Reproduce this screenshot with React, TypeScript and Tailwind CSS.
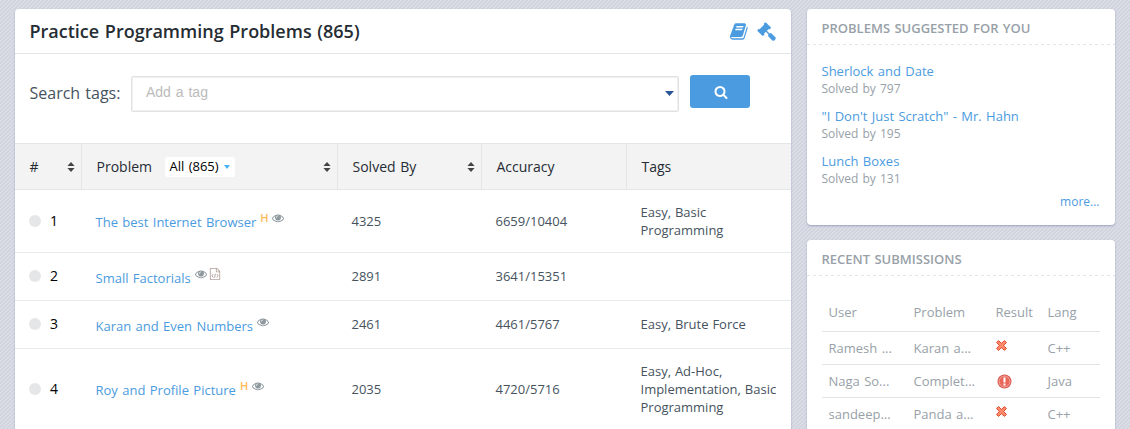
import React from "react";

const BOOK =
  "M1639 478q40 57 18 129l-275 906q-19 64-76.5 107.5t-122.500 43.500h-923q-77 0-148.500-53.500t-99.500-131.500q-24-67-2-127 0-4 3-27t4-37q1-8-3-21.500t-3-19.500q2-11 8-21t16.500-23.500 16.500-23.500q23-38 45-91.500t30-91.500q3-10 .5-30t-.5-28q3-11 17-28t17-23q21-36 42-92t25-90q1-9-2.500-32t.5-28q4-13 22-30.500t22-22.500q19-26 42.500-84.500t27.500-96.500q1-8-3-25.500t-2-26.500q2-8 9-18t18-23 17-21q8-12 16.500-30.500t15-35 16-36 19.500-32 26.500-23.500 36-11.500 47.500 5.500l-1 3q38-9 51-9h761q74 0 114 56t18 130l-274 906q-36 119-71.500 153.500t-128.500 34.500h-869q-27 0-38 15-11 16-1 43 24 70 144 70h923q29 0 56-15.500t35-41.500l300-987q7-22 5-57 38 15 59 43zm-1064 2q-4 13 2 22.500t20 9.500h608q13 0 25.500-9.500t16.500-22.500l21-64q4-13-2-22.500t-20-9.500h-608q-13 0-25.500 9.500t-16.500 22.500zm-83 256q-4 13 2 22.500t20 9.500h608q13 0 25.500-9.500t16.500-22.500l21-64q4-13-2-22.500t-20-9.500h-608q-13 0-25.500 9.500t-16.500 22.500z";
const GAVEL =
  "M1771 1536q0 53-37 90l-107 108q-39 37-91 37-53 0-90-37l-363-364q-38-36-38-90 0-53 43-96l-256-256-126 126q-14 14-34 14t-34-14q2 2 12.500 12t12.500 13 10 11.500 10 13.500 6 13.500 5.500 16.500 1.500 18q0 38-28 68-3 3-16.500 18t-19 20.500-18.500 16.500-22 15.500-22 9-26 4.500q-40 0-68-28l-408-408q-28-28-28-68 0-13 4.500-26t9-22 15.500-22 16.500-18.500 20.500-19 18-16.500q30-28 68-28 10 0 18 1.500t16.500 5.500 13.500 6 13.500 10 11.500 10 13 12.500 12 12.500q-14-14-14-34t14-34l348-348q14-14 34-14t34 14q-2-2-12.500-12t-12.500-13-10-11.500-10-13.500-6-13.500-5.500-16.500-1.500-18q0-38 28-68 3-3 16.500-18t19-20.500 18.500-16.500 22-15.500 22-9 26-4.500q40 0 68 28l408 408q28 28 28 68 0 13-4.500 26t-9 22-15.500 22-16.500 18.500-20.500 19-18 16.500q-30 28-68 28-10 0-18-1.500t-16.500-5.500-13.500-6-13.500-10-11.500-10-13-12.500-12-12.500q14 14 14 34t-14 34l-126 126 256 256q43-43 96-43 52 0 91 37l363 363q37 39 37 91z";
const SEARCH =
  "M1216 832q0-185-131.500-316.500t-316.500-131.500-316.500 131.500-131.500 316.500 131.500 316.500 316.500 131.500 316.500-131.500 131.500-316.500zm512 832q0 52-38 90t-90 38q-54 0-90-38l-343-342q-179 124-399 124-143 0-273.500-55.500t-225-150-150-225-55.500-273.500 55.500-273.500 150-225 225-150 273.500-55.500 273.500 55.500 225 150 150 225 55.500 273.500q0 220-124 399l343 343q37 37 37 90z";
const EYE =
  "M1664 960q-152-236-381-353 61 104 61 225 0 185-131.500 316.500t-316.500 131.500-316.500-131.500-131.500-316.500q0-121 61-225-229 117-381 353 133 205 333.500 326.500t434.500 121.500 434.500-121.500 333.500-326.500zm-720-384q0-20-14-34t-34-14q-125 0-214.500 89.500t-89.500 214.500q0 20 14 34t34 14 34-14 14-34q0-86 61-147t147-61q20 0 34-14t14-34zm848 384q0 34-20 69-140 230-376.500 368.500t-499.500 138.500-499.500-139-376.500-368q-20-35-20-69t20-69q140-229 376.500-368t499.500-139 499.500 139 376.500 368q20 35 20 69z";
const FILE =
  "M1596 380q28 28 48 76t20 88v1152q0 40-28 68t-68 28h-1344q-40 0-68-28t-28-68v-1600q0-40 28-68t68-28h896q40 0 88 20t76 48zm-444-244v376h376q-10-29-22-41l-313-313q-12-12-41-22zm384 1528v-1024h-416q-40 0-68-28t-28-68v-416h-768v1536h1280z";

function Glyph({ d, className, children }: { d: string; className: string; children?: React.ReactNode }) {
  return (
    <svg viewBox="0 0 1792 1792" fill="currentColor" className={className}>
      <path d={d} />
      {children}
    </svg>
  );
}

function Sort() {
  return (
    <svg viewBox="0 0 8 10" className="h-[10px] w-[8px] shrink-0 text-[#444]" fill="currentColor">
      <path d="M4 0L7.600 4H.4zM4 10L.4 6h7.200z" />
    </svg>
  );
}

type Mark = "H" | "eye" | "file";
type Row = { n: number; name: string; marks: Mark[]; solved: string; acc: string; tags: string; h: string; link: string };

const rows: Row[] = [
  { n: 1, name: "The best Internet Browser", marks: ["H", "eye"], solved: "4325", acc: "6659/10404", tags: "Easy, Basic Programming", h: "h-[63px]", link: "pt-[1px]" },
  { n: 2, name: "Small Factorials", marks: ["eye", "file"], solved: "2891", acc: "3641/15351", tags: "", h: "h-[48px] pb-[1px]", link: "pt-[3px]" },
  { n: 3, name: "Karan and Even Numbers", marks: ["eye"], solved: "2461", acc: "4461/5767", tags: "Easy, Brute Force", h: "h-[48px] pb-[1px]", link: "pt-[3px]" },
  { n: 4, name: "Roy and Profile Picture", marks: ["H", "eye"], solved: "2035", acc: "4720/5716", tags: "Easy, Ad-Hoc, Implementation, Basic Programming", h: "h-[82px] pb-[2px]", link: "pt-[3px]" },
];

const GRID = "grid grid-cols-[67px_256px_144px_145px_164px]";

function MarkIcon({ mark }: { mark: Mark }) {
  if (mark === "H") return <span className="w-[10px] text-[11px] leading-[12px] font-semibold text-[#fcbb58]">H</span>;
  if (mark === "eye") return <Glyph d={EYE} className="h-[12px] w-[12px] text-[#8e989f]" />;
  return (
    <Glyph d={FILE} className="h-[12px] w-[12px] text-[#b3a09c]">
      <path
        d="M640 900L440 1160l200 260M1152 900l200 260-200 260M960 860L830 1460"
        fill="none"
        stroke="currentColor"
        strokeWidth="140"
      />
    </Glyph>
  );
}

function ProblemRow({ row }: { row: Row }) {
  return (
    <div className={`${GRID} ${row.h} items-center border-b border-[#e9eaeb] text-[13px] leading-[18px] text-[#46535e]`}>
      <div className="flex items-center pl-[14px]">
        <span className="size-[12px] rounded-full bg-[#e4e6e8]" />
        <span className="pl-[9px] text-[14px] text-black">{row.n}</span>
      </div>
      <div className={`flex items-start pl-[13.5px] ${row.link}`}>
        <a className="text-[#4b9be0] [word-spacing:1px]">{row.name}</a>
        <span className="-mt-[1px] flex items-center gap-[2px] pl-[4px]">
          {row.marks.map((m) => (
            <MarkIcon key={m} mark={m} />
          ))}
        </span>
      </div>
      <div className="pl-[13.5px]">{row.solved}</div>
      <div className="pl-[13.5px]">{row.acc}</div>
      <div className="pr-[10px] pl-[13.5px] [word-spacing:0.5px]">{row.tags}</div>
    </div>
  );
}

function Wrong() {
  return (
    <svg viewBox="0 0 11 11" className="h-[11px] w-[11px]">
      <path
        d="M2.500 .6L5.500 3.300 8.500 .6 10.400 2.500 7.700 5.500 10.400 8.500 8.500 10.400 5.500 7.700 2.500 10.400 .6 8.500 3.300 5.500 .6 2.500z"
        fill="#ff8a6c"
        stroke="#de4a2c"
        strokeWidth="1"
      />
    </svg>
  );
}

function Alert() {
  return (
    <svg viewBox="0 0 15 15" className="h-[15px] w-[15px]">
      <circle cx="7.500" cy="7.500" r="7" fill="#d9534a" />
      <circle cx="7.500" cy="7.500" r="5.500" fill="#e8675a" stroke="#f6b5aa" strokeWidth=".9" />
      <path d="M6.500 3.500h2v5h-2zM6.500 9.500h2v2h-2z" fill="#fff" />
    </svg>
  );
}

const suggested = [
  ["Sherlock and Date", "797"],
  ["\"I Don't Just Scratch\" - Mr. Hahn", "195"],
  ["Lunch Boxes", "131"],
];

const recent = [
  { user: "Ramesh ...", problem: "Karan a...", alert: false, lang: "C++" },
  { user: "Naga So...", problem: "Complet...", alert: true, lang: "Java" },
  { user: "sandeep...", problem: "Panda a...", alert: false, lang: "C++" },
];

const RGRID = "grid grid-cols-[85px_82px_52px_59px] pl-[6.5px]";
const PANEL = "rounded-[4px] bg-white shadow-[0_1px_2px_rgba(120,125,170,0.6)]";

function SideHeading({ children }: { children: React.ReactNode }) {
  return (
    <div>
      <h2 className="flex h-[35px] items-center pt-[4px] pl-[14.5px] text-[13px] font-semibold text-[#98a1a8] [word-spacing:1px]">
        {children}
      </h2>
      <div className="h-px bg-[repeating-linear-gradient(90deg,#e3e4e5_0,#e3e4e5_3px,transparent_3px,transparent_6px)]" />
    </div>
  );
}

export default function App() {
  return (
    <div className="flex h-[429px] w-[1130px] items-start gap-[16px] overflow-hidden bg-[#d4d7e1] bg-[linear-gradient(135deg,#dadde6_25%,#d1d4df_25%,#d1d4df_50%,#dadde6_50%,#dadde6_75%,#d1d4df_75%)] bg-[size:4px_4px] pt-[9px] pl-[15px] font-['Open_Sans',sans-serif]">
      <main className={`${PANEL} h-[440px] w-[776px] shrink-0`}>
        <header className="flex h-[45px] items-center border-b border-[#e4e5e7] pr-[15px] pl-[14.5px]">
          <h1 className="flex-1 text-[18px] font-semibold text-[#252c33] [word-spacing:1px]">
            Practice Programming Problems (865)
          </h1>
          <Glyph d={BOOK} className="mt-px mr-[8px] h-[19px] w-[19px] text-[#4b9be0]" />
          <Glyph d={GAVEL} className="h-[19px] w-[19px] text-[#4b9be0]" />
        </header>
        <div className="flex h-[89px] items-start pt-[21px] pl-[14.5px]">
          <label className="w-[101.5px] pt-[6px] text-[16px] leading-[24px] text-[#46535e] [word-spacing:1px]">
            Search tags:
          </label>
          <div className="mt-px flex h-[36px] w-[548px] items-center justify-between rounded-[2px] border border-[#e0e1e3] pr-[4px] pl-[14px] shadow-[inset_0_0_0_1px_#f1f1f2]">
            <span className="pb-[4px] font-['Liberation_Sans',sans-serif] text-[14px] [word-spacing:1px] text-[#bbb]">Add a tag</span>
            <svg viewBox="0 0 9 5" className="mb-[1px] h-[5px] w-[9px]" fill="#2a5599">
              <path d="M0 0h9L4.500 5z" />
            </svg>
          </div>
          <button className="ml-[11px] flex h-[33px] w-[60px] items-center justify-center rounded-[3px] bg-[#4b9be0] text-white">
            <Glyph d={SEARCH} className="mt-[1px] ml-[1px] h-[14px] w-[14px]" />
          </button>
        </div>
        <div className={`${GRID} h-[47px] border-y border-[#e4e5e7] bg-[#f3f3f3] text-[14px] text-[#252c33] [word-spacing:1px]`}>
          <div className="flex items-center justify-between border-r border-[#e4e5e7] pr-[6.5px] pl-[14.5px]">
            <span>#</span>
            <Sort />
          </div>
          <div className="flex items-center border-r border-[#e4e5e7] pr-[6.5px] pl-[14.5px]">
            <span>Problem</span>
            <span className="mr-auto ml-[12.5px] flex h-[20px] w-[70px] items-center rounded-[2px] bg-white pl-[5px] text-[13px] text-black">
              All (865)
              <svg viewBox="0 0 6 4" className="ml-[5px] h-[4px] w-[6px]" fill="#45b3f5">
                <path d="M0 0h6L3 4z" />
              </svg>
            </span>
            <Sort />
          </div>
          <div className="flex items-center justify-between border-r border-[#e4e5e7] pr-[6.5px] pl-[14.5px]">
            <span>Solved By</span>
            <Sort />
          </div>
          <div className="flex items-center border-r border-[#e4e5e7] pl-[14.5px]">Accuracy</div>
          <div className="flex items-center pl-[14.5px]">Tags</div>
        </div>
        {rows.map((r) => (
          <ProblemRow key={r.n} row={r} />
        ))}
      </main>
      <aside className="flex w-[308px] shrink-0 flex-col gap-[15px]">
        <section className={`${PANEL} h-[216px]`}>
          <SideHeading>PROBLEMS SUGGESTED FOR YOU</SideHeading>
          <div className="flex flex-col gap-[10px] pt-[17px] pl-[14.5px] [word-spacing:1px]">
            {suggested.map(([name, n]) => (
              <div key={name} className="flex flex-col">
                <a className="text-[13px] leading-[19px] text-[#4b9be0]">{name}</a>
                <span className="text-[12px] leading-[16px] text-[#98a1a8]">Solved by {n}</span>
              </div>
            ))}
          </div>
          <div className="pt-[6px] pr-[15.500px] text-right text-[12px] leading-[17px] text-[#4b9be0]">more...</div>
        </section>
        <section className={`${PANEL} h-[240px]`}>
          <SideHeading>RECENT SUBMISSIONS</SideHeading>
          <div className="mt-[18px] ml-[15px] w-[278px] text-[13px] text-[#98a1a8] [word-spacing:1px]">
            <div className={`${RGRID} h-[38px] items-center border-b border-[#e1e3e4]`}>
              <span>User</span>
              <span>Problem</span>
              <span>Result</span>
              <span>Lang</span>
            </div>
            {recent.map((r) => (
              <div key={r.user} className={`${RGRID} h-[33px] items-center border-b border-[#e1e3e4] pt-[2px]`}>
                <span>{r.user}</span>
                <span>{r.problem}</span>
                <span className={r.alert ? "pb-[1px] pl-[1px]" : "pb-[8px]"}>{r.alert ? <Alert /> : <Wrong />}</span>
                <span>{r.lang}</span>
              </div>
            ))}
          </div>
        </section>
      </aside>
    </div>
  );
}
